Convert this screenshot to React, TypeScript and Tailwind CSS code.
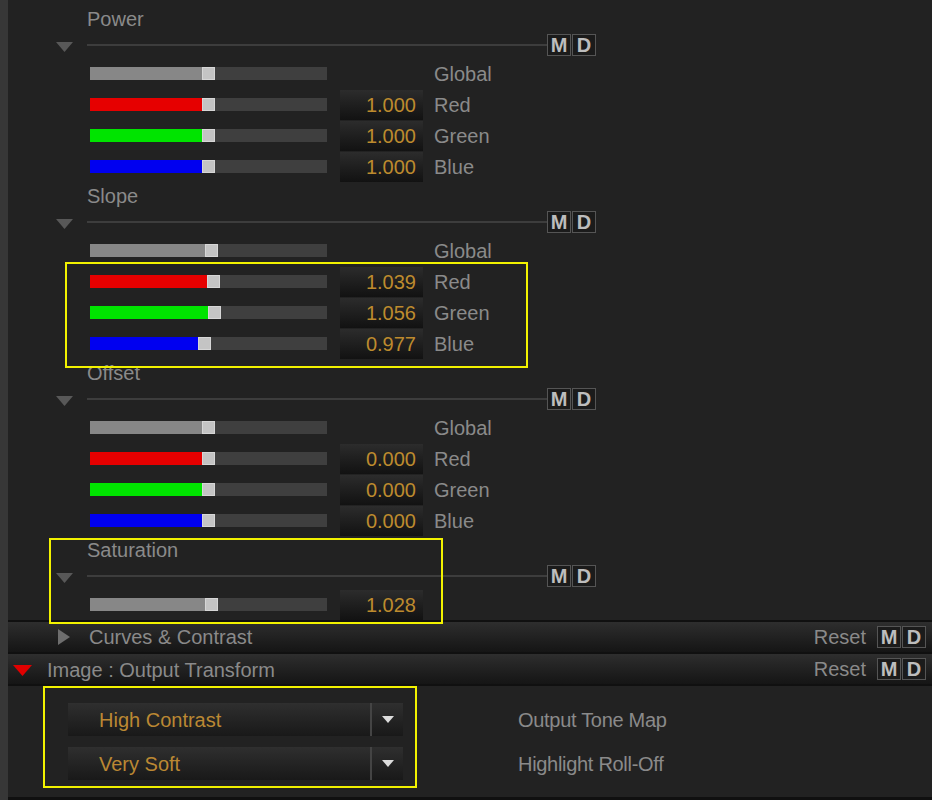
import type { ReactNode } from 'react'

type Row = { label: string; color: string; thumb: number; value?: string }

type Section = { title: string; rows: Row[] }

const GRAY = '#878787'
const RED = '#e60000'
const GREEN = '#00e400'
const BLUE = '#0000f0'

const sections: Section[] = [
  {
    title: 'Power',
    rows: [
      { label: 'Global', color: GRAY, thumb: 112 },
      { label: 'Red', color: RED, thumb: 112, value: '1.000' },
      { label: 'Green', color: GREEN, thumb: 112, value: '1.000' },
      { label: 'Blue', color: BLUE, thumb: 112, value: '1.000' },
    ],
  },
  {
    title: 'Slope',
    rows: [
      { label: 'Global', color: GRAY, thumb: 115 },
      { label: 'Red', color: RED, thumb: 117, value: '1.039' },
      { label: 'Green', color: GREEN, thumb: 118, value: '1.056' },
      { label: 'Blue', color: BLUE, thumb: 108, value: '0.977' },
    ],
  },
  {
    title: 'Offset',
    rows: [
      { label: 'Global', color: GRAY, thumb: 112 },
      { label: 'Red', color: RED, thumb: 112, value: '0.000' },
      { label: 'Green', color: GREEN, thumb: 112, value: '0.000' },
      { label: 'Blue', color: BLUE, thumb: 112, value: '0.000' },
    ],
  },
]

function MD() {
  return (
    <div className="flex gap-px">
      <span className="flex h-[22px] w-[24px] items-center justify-center border border-[#555] bg-[#1b1b1b] text-[20px] font-bold leading-none text-[#bdbdbd]">
        M
      </span>
      <span className="flex h-[22px] w-[24px] items-center justify-center border border-[#555] bg-[#1b1b1b] text-[20px] font-bold leading-none text-[#bdbdbd]">
        D
      </span>
    </div>
  )
}

function Slider({ color, thumb }: { color: string; thumb: number }) {
  return (
    <div className="flex h-[13px] w-[237px] bg-[#3f3f3f]">
      <div className="h-full" style={{ width: thumb, backgroundColor: color }} />
      <div className="h-full w-[13px] border border-[#d6d6d6] bg-[#c4c4c4]" />
    </div>
  )
}

function ValueBox({ value }: { value?: string }) {
  if (!value) return <div className="ml-[13px] w-[83px]" />
  return (
    <div className="ml-[13px] flex h-[30px] w-[83px] items-center justify-end bg-gradient-to-b from-[#2c2c2c] to-[#121212] pr-[7px] text-[20px] text-[#bd8b2e]">
      {value}
    </div>
  )
}

function SliderRow({ row }: { row: Row }) {
  return (
    <div className="flex h-[31px] items-center pl-[82px]">
      <Slider color={row.color} thumb={row.thumb} />
      <ValueBox value={row.value} />
      <span className="ml-[11px] text-[20px] text-[#8a8a8a]">{row.label}</span>
    </div>
  )
}

function SectionHead({ title }: { title: string }) {
  return (
    <>
      <div className="flex h-[28px] items-center pl-[79px] text-[20px] text-[#8a8a8a]">{title}</div>
      <div className="mb-[2px] flex h-[23px] items-center">
        <div className="w-[79px] pl-[48px] pt-[4px]">
          <svg width="17" height="10" viewBox="0 0 17 10">
            <polygon points="0,0 17,0 8.5,10" fill="#585858" />
          </svg>
        </div>
        <div className="h-[2px] w-[460px] bg-[#3d3d3d]" />
        <MD />
      </div>
    </>
  )
}

function Bar({ children }: { children: ReactNode }) {
  return (
    <div className="flex h-[32px] items-center border-t-2 border-[#101010] bg-gradient-to-b from-[#2e2e2e] to-[#151515] pr-[6px]">
      {children}
      <span className="ml-auto mr-[11px] text-[20px] text-[#8a8a8a]">Reset</span>
      <MD />
    </div>
  )
}

function Dropdown({ text }: { text: string }) {
  return (
    <div className="flex h-[33px] w-[335px]">
      <div className="flex flex-1 items-center bg-gradient-to-b from-[#2f2f2f] to-[#191919] pl-[31px] text-[20px] text-[#bb8833]">
        {text}
      </div>
      <div className="w-[2px] bg-[#444]" />
      <div className="flex w-[31px] items-center justify-center bg-gradient-to-b from-[#2f2f2f] to-[#191919]">
        <svg width="12" height="7" viewBox="0 0 12 7">
          <polygon points="0,0 12,0 6,7" fill="#dcdcdc" />
        </svg>
      </div>
    </div>
  )
}

export default function App() {
  return (
    <div className="relative flex h-[800px] w-[932px] overflow-hidden bg-[#222] font-['Liberation_Sans',Arial,sans-serif]">
      <div className="w-[8px] shrink-0 bg-[#373737]" />
      <div className="flex flex-1 flex-col">
        <div className="pt-[5px]">
          {sections.map((s) => (
            <div key={s.title}>
              <SectionHead title={s.title} />
              {s.rows.map((r) => (
                <SliderRow key={r.label} row={r} />
              ))}
            </div>
          ))}
          <div>
            <SectionHead title="Saturation" />
            <SliderRow row={{ label: '', color: GRAY, thumb: 115, value: '1.028' }} />
          </div>
        </div>

        <Bar>
          <div className="flex items-center">
            <svg className="ml-[50px]" width="12" height="16" viewBox="0 0 12 16">
              <polygon points="0,0 12,8 0,16" fill="#6e6e6e" />
            </svg>
            <span className="ml-[19px] text-[20px] text-[#8a8a8a]">Curves &amp; Contrast</span>
          </div>
        </Bar>
        <Bar>
          <div className="flex items-center pt-[2px]">
            <svg className="ml-[5px]" width="19" height="11" viewBox="0 0 19 11">
              <polygon points="0,0 19,0 9.5,11" fill="#e00000" />
            </svg>
            <span className="ml-[15px] text-[20px] text-[#8a8a8a]">Image : Output Transform</span>
          </div>
        </Bar>

        <div className="flex flex-1 flex-col gap-[11px] border-t-2 border-b-[3px] border-[#101010] pl-[60px] pt-[17px]">
          <div className="flex items-center">
            <Dropdown text="High Contrast" />
            <span className="ml-[115px] text-[20px] tracking-[-0.3px] text-[#8a8a8a]">Output Tone Map</span>
          </div>
          <div className="flex items-center">
            <Dropdown text="Very Soft" />
            <span className="ml-[115px] text-[20px] tracking-[-0.3px] text-[#8a8a8a]">Highlight Roll-Off</span>
          </div>
        </div>
      </div>

      {/* yellow annotation boxes drawn over the panel */}
      <div className="pointer-events-none absolute left-[65px] top-[262px] h-[106px] w-[463px] border-[2.5px] border-[#f2f200]" />
      <div className="pointer-events-none absolute left-[49px] top-[538px] h-[86px] w-[394px] border-[2.5px] border-[#f2f200]" />
      <div className="pointer-events-none absolute left-[43px] top-[686px] h-[102px] w-[374px] border-[2.5px] border-[#f2f200]" />
    </div>
  )
}
